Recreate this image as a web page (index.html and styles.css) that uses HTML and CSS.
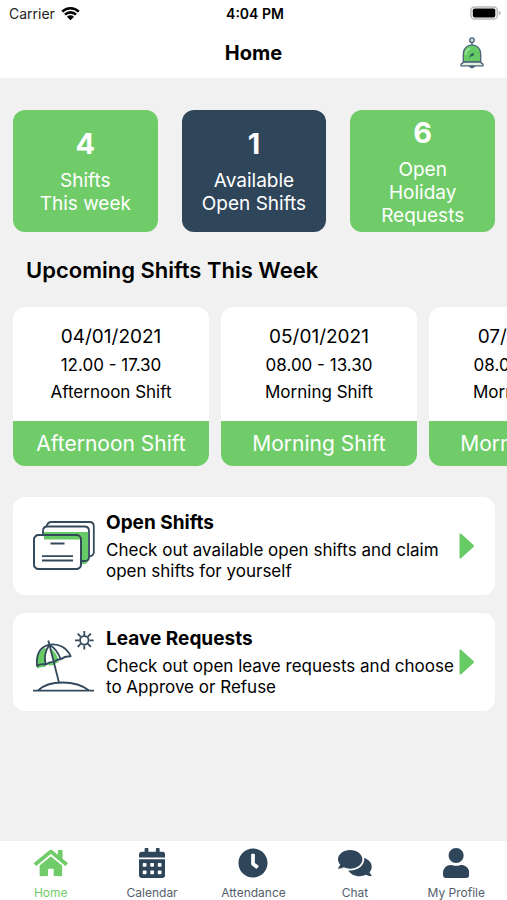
FILE: index.html
```html
<!DOCTYPE html>
<html lang="en">
<head>
<meta charset="utf-8">
<meta name="viewport" content="width=device-width, initial-scale=1">
<title>Home</title>
<link rel="stylesheet" href="styles.css">
</head>
<body>
<header class="header">
  <div class="status">
    <div class="carrier">Carrier
      <svg width="19" height="15" viewBox="0 0 19 15" aria-hidden="true"><path d="M1.2 5.6a11.8 11.8 0 0 1 16.6 0M4 8.6a7.8 7.8 0 0 1 11 0" fill="none" stroke="#000" stroke-width="2.6"/><path d="M9.500 14.200 6 10.700a5 5 0 0 1 7 0z"/></svg>
    </div>
    <time class="clock">4:04 PM</time>
    <svg class="battery" width="31" height="14" viewBox="0 0 31 14" aria-hidden="true"><rect x=".9" y=".9" width="26.400" height="12.200" rx="3.600" fill="#fff" stroke="#b9b9b9" stroke-width="1.500"/><rect x="2.800" y="2.500" width="22.500" height="9" rx="1.800"/><path d="M28.800 4.600q2 .8 2 2.400t-2 2.400z" fill="#b9b9b9"/></svg>
  </div>
  <div class="navbar">
    <h1 class="title">Home</h1>
    <button class="bell" type="button" aria-label="Notifications">
      <svg width="24" height="32" viewBox="0 0 24 32"><g stroke="#4b6075" stroke-width="1.300" fill="none"><circle cx="12" cy="3.200" r="2.300" fill="#d5dae0"/><path d="M12 5.500v3"/><path d="M9.500 29q2.500 3.200 5 0z" fill="#d5dae0"/><path d="M3.300 25V16.500a8.700 8.700 0 0 1 17.400 0V25z" fill="#67cb65"/><path d="M3.300 25h17.400q.3 1.500 2.300 2.200v1.600h-22v-1.600q2-.7 2.300-2.200z" fill="#dff3e3"/></g><path d="M5.800 18q0-5 4-6.500" fill="none" stroke="#b5e8b4" stroke-width="1.200"/><path d="M10 19.500q-.5-3.300 4-3.500.5 4-4 3.500z" fill="#2f6b55"/><path d="m8.800 20.600 4-3.400" stroke="#2f6b55"/></svg>
    </button>
  </div>
</header>

<main class="content">
  <section class="stats" aria-label="Summary">
    <a class="stat" href="#week"><strong class="stat-number">4</strong><span>Shifts<br>This week</span></a>
    <a class="stat stat-dark" href="#open"><strong class="stat-number">1</strong><span>Available Open Shifts</span></a>
    <a class="stat" href="#leave"><strong class="stat-number">6</strong><span>Open<br>Holiday Requests</span></a>
  </section>

  <h2 class="section-title" id="week">Upcoming Shifts This Week</h2>
  <div class="shifts">
    <article class="shift">
      <div class="shift-body"><h3 class="shift-date">04/01/2021</h3><p>12.00 - 17.30</p><p>Afternoon Shift</p></div>
      <div class="shift-type">Afternoon Shift</div>
    </article>
    <article class="shift">
      <div class="shift-body"><h3 class="shift-date">05/01/2021</h3><p>08.00 - 13.30</p><p>Morning Shift</p></div>
      <div class="shift-type">Morning Shift</div>
    </article>
    <article class="shift">
      <div class="shift-body"><h3 class="shift-date">07/01/2021</h3><p>08.00 - 13.30</p><p>Morning Shift</p></div>
      <div class="shift-type">Morning Shift</div>
    </article>
  </div>

  <nav class="links" aria-label="Requests">
    <a class="link-card" id="open" href="#open">
      <svg class="link-icon" width="62" height="62" viewBox="0 -1 62 62" fill="none" stroke="#33495c" stroke-width="1.800" aria-hidden="true">
        <path d="M11 16h44v28q0 4-4 4h-4V24H11z" fill="#67cb65" stroke="none"/>
        <path d="M13.500 10.500q1-4.500 5-4.500h38q4.300 0 4.300 4.300V36q0 4-4.800 4.500"/>
        <path d="M10 19v-4q0-4.500 4.500-4.500h37Q56 10.500 56 15v26q0 4-4 4h-4"/>
        <rect x="1" y="19" width="47" height="34" rx="4.500" fill="#fff"/>
        <path d="M11 19h32q5 0 5 4.500H11z" fill="#67cb65" stroke="none"/>
        <rect x="1" y="19" width="47" height="34" rx="4.500"/>
        <path d="M17.500 27.500h14M9 40.200h31M9 44.500h31"/>
      </svg>
      <div class="link-text"><h3 class="link-title">Open Shifts</h3><p>Check out available open shifts and claim open shifts for yourself</p></div>
      <svg class="caret" width="16" height="26" viewBox="0 0 16 26" aria-hidden="true"><path d="M1.500 1.500v23l12.500-11.500z" fill="#67cb65" stroke="#67cb65" stroke-width="2" stroke-linejoin="round"/></svg>
    </a>
    <a class="link-card" id="leave" href="#leave">
      <svg class="link-icon" width="62" height="62" viewBox="0 0 62 62" fill="none" stroke="#33495c" stroke-width="1.800" aria-hidden="true">
        <path d="M4 37.500Q2 24 11 17l3 1q-3 7-1.500 15l-.5 3q-4-.5-8 1.500zM17.500 17q6 4 8.500 14-3 .5-5 3l-5 .5-1.500-2 6-1.500z" fill="#67cb65" stroke="none"/>
        <path d="M15.300 9.500 26 51.500M4 35C3 24 7 16 16.300 13.700 26 12 34 17 37.700 25.300q-5.500-.5-10 3-3.900-.3-6.400 2.700-4.600-.8-8.600 2.700Q8 32 4 35zM16.300 13.700Q10 23 12.700 33.700M16.300 13.700Q24 18 27.700 28.300" stroke-linejoin="round"/>
        <path d="M5 59.500q8-8 24.500-8T56 59.500M0 59.700h61"/>
        <circle cx="51.300" cy="9.300" r="4.300"/>
        <path d="M51.300 0v4M51.300 14.600v4M42 9.300h4M56.600 9.300h4M44.700 2.700l3 3M54.900 12.900l3 3M44.700 15.900l3-3M54.900 5.700l3-3"/>
      </svg>
      <div class="link-text"><h3 class="link-title">Leave Requests</h3><p>Check out open leave requests and choose to Approve or Refuse</p></div>
      <svg class="caret" width="16" height="26" viewBox="0 0 16 26" aria-hidden="true"><path d="M1.500 1.500v23l12.500-11.500z" fill="#67cb65" stroke="#67cb65" stroke-width="2" stroke-linejoin="round"/></svg>
    </a>
  </nav>
</main>

<nav class="tabs" aria-label="Main">
  <a class="tab tab-active" href="#home" aria-current="page"><svg class="tab-icon" viewBox="0 0 576 512" aria-hidden="true"><path d="M280.37 148.26L96 300.11V464a16 16 0 0 0 16 16l112.06-.29a16 16 0 0 0 15.92-16V368a16 16 0 0 1 16-16h64a16 16 0 0 1 16 16v95.64a16 16 0 0 0 16 16.05L464 480a16 16 0 0 0 16-16V300L295.67 148.26a12.19 12.19 0 0 0-15.3 0zM571.6 251.47L488 182.56V44.05a12 12 0 0 0-12-12h-56a12 12 0 0 0-12 12v72.61L318.47 43a48 48 0 0 0-61 0L4.34 251.47a12 12 0 0 0-1.6 16.9l25.5 31A12 12 0 0 0 45.15 301l235.22-193.74a12.19 12.19 0 0 1 15.3 0L530.9 301a12 12 0 0 0 16.9-1.6l25.5-31a12 12 0 0 0-1.7-16.93z"/></svg>Home</a>
  <a class="tab" href="#calendar"><svg class="tab-icon" viewBox="0 0 448 512" aria-hidden="true"><path d="M0 464c0 26.500 21.500 48 48 48h352c26.500 0 48-21.500 48-48V192H0v272zm320-196c0-6.600 5.400-12 12-12h40c6.600 0 12 5.400 12 12v40c0 6.600-5.400 12-12 12h-40c-6.600 0-12-5.400-12-12v-40zm0 128c0-6.600 5.400-12 12-12h40c6.600 0 12 5.400 12 12v40c0 6.600-5.400 12-12 12h-40c-6.600 0-12-5.400-12-12v-40zM192 268c0-6.600 5.400-12 12-12h40c6.600 0 12 5.400 12 12v40c0 6.600-5.400 12-12 12h-40c-6.600 0-12-5.400-12-12v-40zm0 128c0-6.600 5.400-12 12-12h40c6.600 0 12 5.400 12 12v40c0 6.600-5.400 12-12 12h-40c-6.600 0-12-5.400-12-12v-40zM64 268c0-6.600 5.400-12 12-12h40c6.600 0 12 5.400 12 12v40c0 6.600-5.400 12-12 12H76c-6.600 0-12-5.400-12-12v-40zm0 128c0-6.600 5.400-12 12-12h40c6.600 0 12 5.400 12 12v40c0 6.600-5.400 12-12 12H76c-6.600 0-12-5.400-12-12v-40zM400 64h-48V16c0-8.800-7.200-16-16-16h-32c-8.800 0-16 7.200-16 16v48H160V16c0-8.800-7.200-16-16-16h-32c-8.800 0-16 7.200-16 16v48H48C21.500 64 0 85.500 0 112v48h448v-48c0-26.500-21.500-48-48-48z"/></svg>Calendar</a>
  <a class="tab" href="#attendance"><svg class="tab-icon" viewBox="0 0 512 512" aria-hidden="true"><path d="M256,8C119,8,8,119,8,256S119,504,256,504,504,393,504,256,393,8,256,8Zm92.490,313h0l-20,25a16,16,0,0,1-22.490,2.500h0l-67-49.720a40,40,0,0,1-15-31.230V112a16,16,0,0,1,16-16h32a16,16,0,0,1,16,16V256l58,42.500A16,16,0,0,1,348.490,321Z"/></svg>Attendance</a>
  <a class="tab" href="#chat"><svg class="tab-icon" viewBox="0 0 576 512" aria-hidden="true"><path d="M416 192c0-88.400-93.100-160-208-160S0 103.600 0 192c0 34.300 14.100 65.900 38 92-13.400 30.200-35.500 54.200-35.800 54.500-2.200 2.300-2.800 5.700-1.500 8.700S4.800 352 8 352c36.600 0 66.900-12.300 88.700-25 32.200 15.700 70.300 25 111.300 25 114.900 0 208-71.600 208-160zm122 220c23.900-26 38-57.700 38-92 0-66.900-53.500-124.200-129.300-148.100.9 6.600 1.300 13.300 1.300 20.100 0 105.900-107.700 192-240 192-10.800 0-21.300-.8-31.700-1.900C207.800 439.600 281.800 480 368 480c41 0 79.100-9.200 111.300-25 21.800 12.700 52.100 25 88.700 25 3.200 0 6.100-1.900 7.300-4.800 1.300-2.900.7-6.300-1.500-8.700-.3-.3-22.400-24.200-35.800-54.500z"/></svg>Chat</a>
  <a class="tab" href="#profile"><svg class="tab-icon" viewBox="0 0 448 512" aria-hidden="true"><path d="M224 256c70.700 0 128-57.300 128-128S294.700 0 224 0 96 57.300 96 128s57.300 128 128 128zm89.600 32h-16.700c-22.200 10.200-46.900 16-72.900 16s-50.600-5.800-72.900-16h-16.700C60.200 288 0 348.200 0 422.400V464c0 26.500 21.500 48 48 48h352c26.500 0 48-21.500 48-48v-41.600c0-74.200-60.200-134.400-134.400-134.400z"/></svg>My Profile</a>
</nav>
</body>
</html>
```
FILE: styles.css
```css
:root {
  --green: #70cc69;
  --navy: #2f465a;
  --page: #f1f1f1;
}

* {
  box-sizing: border-box;
}

body {
  margin: 0;
  min-height: 100vh;
  display: flex;
  flex-direction: column;
  background: var(--page);
  color: #000;
  font-family: Inter, "Liberation Sans", sans-serif;
}

h1, h2, h3, p {
  margin: 0;
}

a {
  color: inherit;
  text-decoration: none;
}

svg {
  display: block;
  flex: none;
}

.header {
  background: #fff;
}

.status {
  display: grid;
  grid-template-columns: 1fr auto 1fr;
  align-items: center;
  height: 26px;
  padding: 0 6px 0 9px;
  font-size: 14px;
}

.carrier {
  display: flex;
  align-items: center;
  gap: 6px;
  color: #222;
}

.clock {
  font-weight: 600;
}

.battery {
  justify-self: end;
}

.navbar {
  display: grid;
  grid-template-columns: 1fr auto 1fr;
  align-items: center;
  height: 52px;
  padding: 1px 23px 0;
}

.title {
  grid-column: 2;
  font-size: 20px;
  font-weight: 700;
}

.bell {
  justify-self: end;
  padding: 0;
  border: 0;
  background: none;
}

.content {
  flex: 1;
  padding: 32px 12px 24px 13px;
}

.stats {
  display: grid;
  grid-template-columns: repeat(3, 1fr);
  gap: 24px;
}

.stat {
  display: flex;
  flex-direction: column;
  justify-content: center;
  align-items: center;
  gap: 8px;
  min-height: 122px;
  padding: 0 16px;
  border-radius: 12px;
  background: var(--green);
  color: #fff;
  font-size: 19px;
  line-height: 23px;
  text-align: center;
}

.stat-dark {
  background: var(--navy);
}

.stat-number {
  font-size: 29px;
  font-weight: 700;
  line-height: 34px;
}

.section-title {
  margin: 24px 13px 23px;
  font-size: 22px;
  font-weight: 600;
  line-height: 28px;
}

.shifts {
  display: flex;
  gap: 12px;
  margin-right: -12px;
  overflow-x: auto;
  scrollbar-width: none;
}

.shift {
  flex: none;
  width: 196px;
  border-radius: 12px;
  overflow: hidden;
  background: #fff;
  text-align: center;
}

.shift-body {
  padding: 15px 8px;
  font-size: 17px;
  line-height: 27px;
}

.shift-date {
  font-size: 19px;
  font-weight: 400;
  line-height: 30px;
}

.shift-type {
  background: var(--green);
  color: #fff;
  font-size: 21px;
  line-height: 45px;
}

.links {
  display: grid;
  gap: 18px;
  margin-top: 31px;
}

.link-card {
  display: flex;
  align-items: center;
  min-height: 98px;
  padding: 12px 20px;
  border-radius: 12px;
  background: #fff;
  font-size: 17px;
  line-height: 21px;
}

.link-icon {
  overflow: visible;
}

.link-text {
  flex: 1;
  margin: 0 4px 0 11px;
}

.link-title {
  margin-bottom: 5px;
  font-size: 19px;
  font-weight: 700;
  line-height: 24px;
}

.tabs {
  display: grid;
  grid-template-columns: repeat(5, 1fr);
  height: 59px;
  background: #fff;
}

.tab {
  display: flex;
  flex-direction: column;
  align-items: center;
  gap: 7px;
  padding-top: 7px;
  color: #53606b;
  font-size: 12px;
  line-height: 16px;
}

.tab-icon {
  height: 30px;
  fill: var(--navy);
}

.tab-active {
  color: var(--green);
}

.tab-active .tab-icon {
  fill: var(--green);
}
```
